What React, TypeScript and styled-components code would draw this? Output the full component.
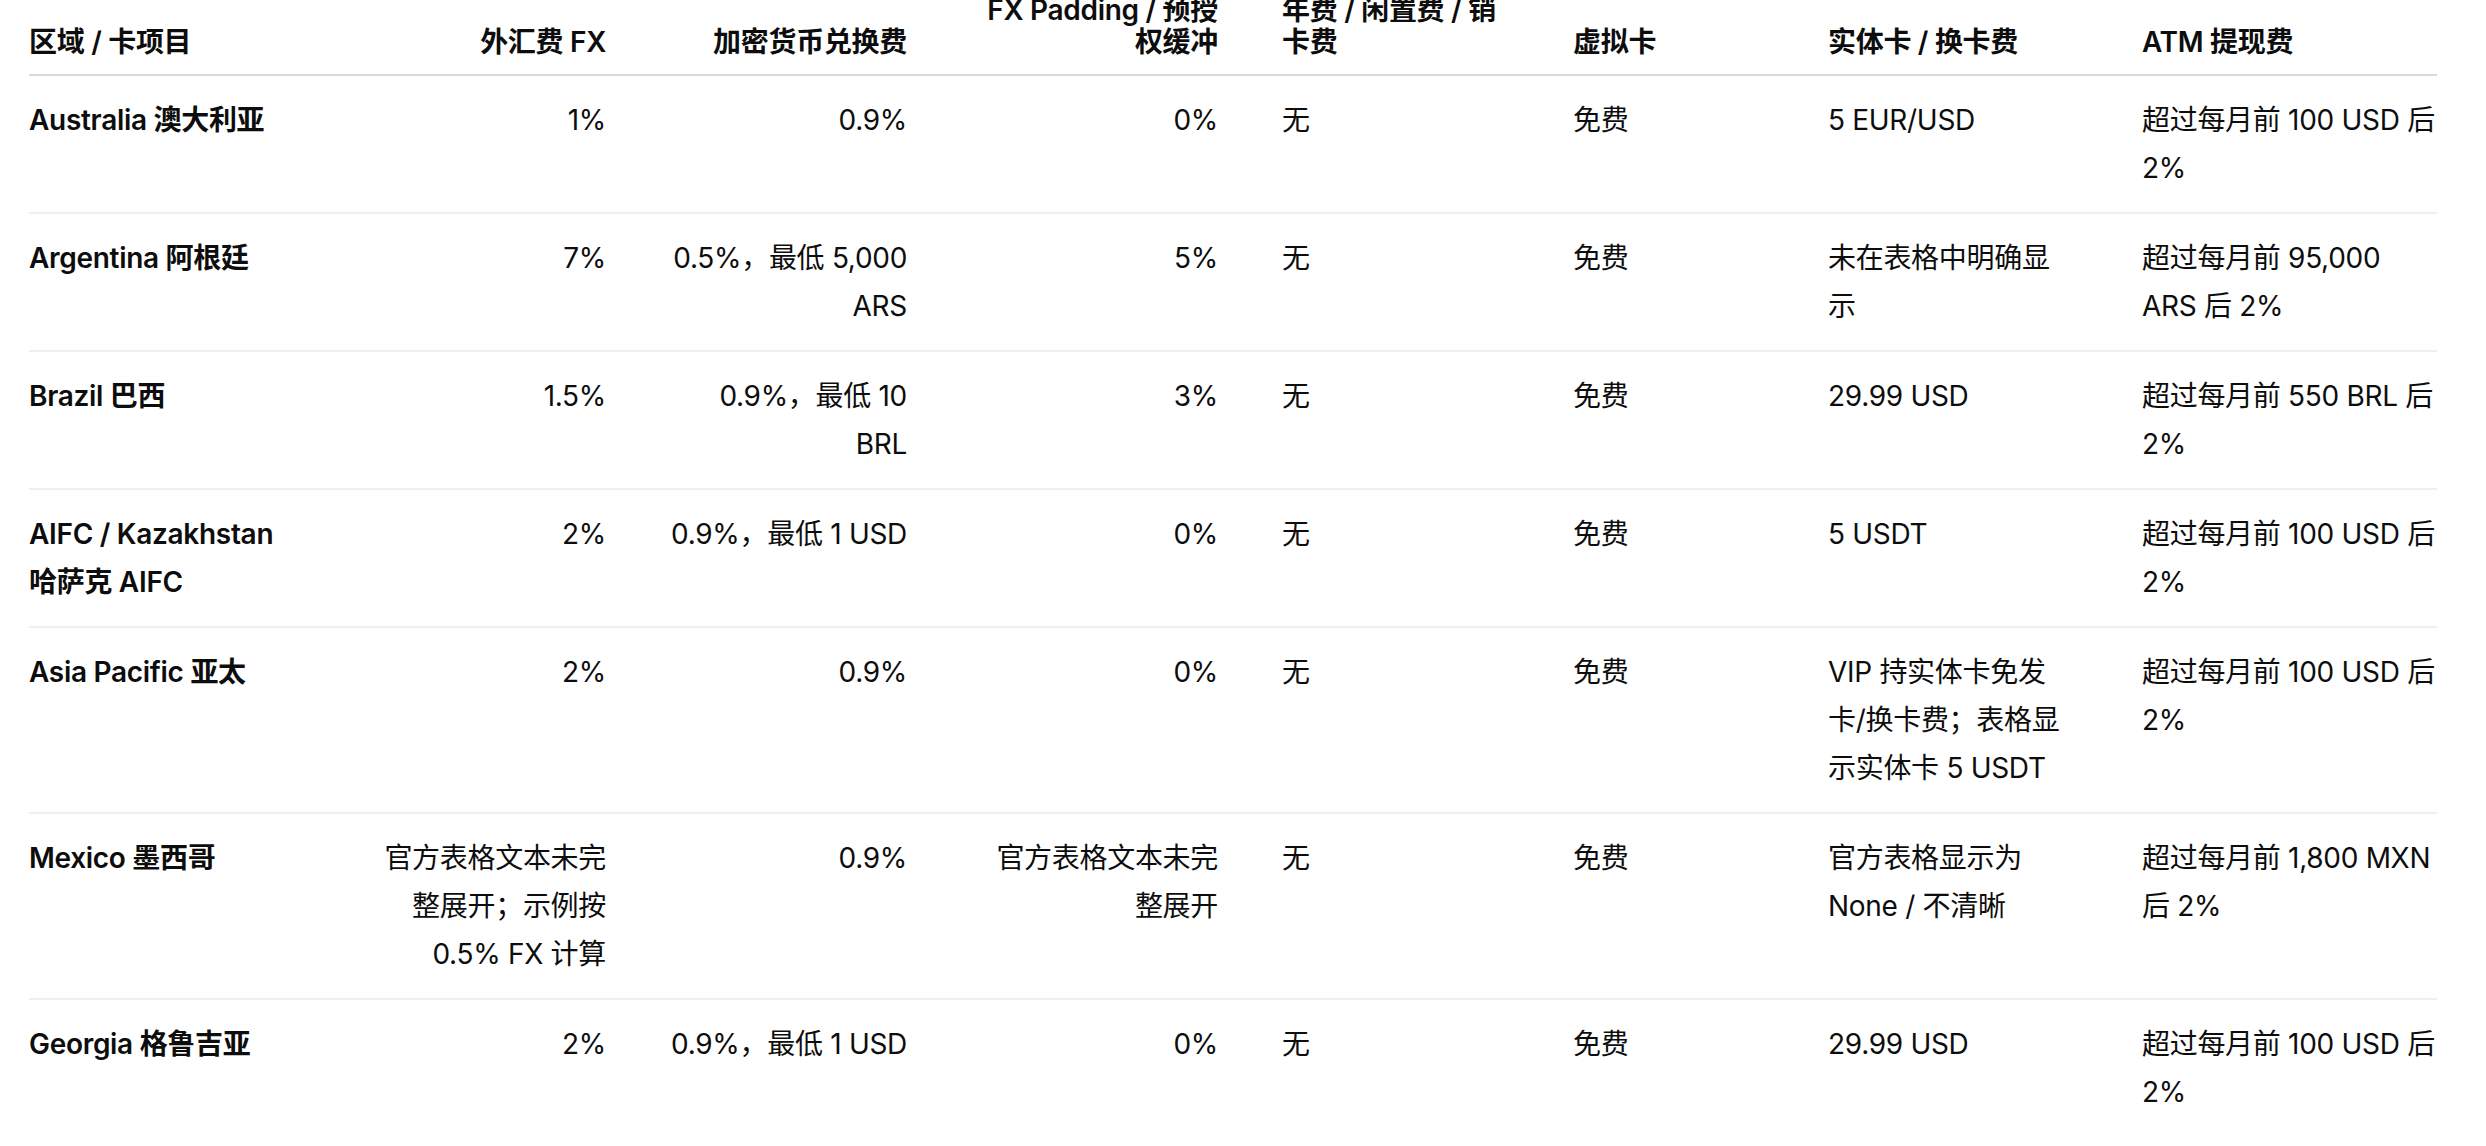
import React from 'react'
import styled, { createGlobalStyle } from 'styled-components'

const GlobalStyle = createGlobalStyle`
  html, body {
    margin: 0;
    padding: 0;
    background: #ffffff;
    overflow: hidden;
  }
  body {
    font-family: "Inter", "Noto Sans CJK SC", sans-serif;
    color: #0d0d0d;
  }
`;

const Page = styled.div`
  padding-left: 29px;
  margin-top: -22px;
`;

const Table = styled.table`
  width: 2408px;
  table-layout: fixed;
  border-collapse: collapse;
  border-spacing: 0;
  font-size: 28px;
  letter-spacing: -0.3px;
`;

type Align = 'left' | 'right';

const HeadCell = styled.th<{ $align: Align }>`
  text-align: ${(p) => p.$align};
  vertical-align: bottom;
  font-weight: 600;
  line-height: 32px;
  padding: 16px 32px 16px 32px;
  border-bottom: 2px solid #d9d9d9;
  white-space: pre;

  &:first-child {
    padding-left: 0;
  }
  &:last-child {
    padding-right: 0;
  }
`;

const Row = styled.tr`
  border-bottom: 2px solid #efefef;

  &:last-child {
    border-bottom: none;
  }
`;

const Cell = styled.td<{ $align: Align; $strong?: boolean }>`
  text-align: ${(p) => p.$align};
  vertical-align: top;
  font-weight: ${(p) => (p.$strong ? 600 : 400)};
  line-height: 48px;
  padding: 20px 32px;
  white-space: pre;

  &:first-child {
    padding-left: 0;
  }
  &:last-child {
    padding-right: 0;
  }
`;

const widths = [316, 293, 301, 311, 291, 255, 314, 327];
const aligns: Align[] = ['left', 'right', 'right', 'right', 'left', 'left', 'left', 'left'];

const headers = [
  '区域 / 卡项目',
  '外汇费 FX',
  '加密货币兑换费',
  'FX Padding / 预授\n权缓冲',
  '年费 / 闲置费 / 销\n卡费',
  '虚拟卡',
  '实体卡 / 换卡费',
  'ATM 提现费',
];

const rows: string[][] = [
  ['Australia 澳大利亚', '1%', '0.9%', '0%', '无', '免费', '5 EUR/USD', '超过每月前 100 USD 后\n2%'],
  ['Argentina 阿根廷', '7%', '0.5%，最低 5,000\nARS', '5%', '无', '免费', '未在表格中明确显\n示', '超过每月前 95,000\nARS 后 2%'],
  ['Brazil 巴西', '1.5%', '0.9%，最低 10\nBRL', '3%', '无', '免费', '29.99 USD', '超过每月前 550 BRL 后\n2%'],
  ['AIFC / Kazakhstan\n哈萨克 AIFC', '2%', '0.9%，最低 1 USD', '0%', '无', '免费', '5 USDT', '超过每月前 100 USD 后\n2%'],
  ['Asia Pacific 亚太', '2%', '0.9%', '0%', '无', '免费', 'VIP 持实体卡免发\n卡/换卡费；表格显\n示实体卡 5 USDT', '超过每月前 100 USD 后\n2%'],
  ['Mexico 墨西哥', '官方表格文本未完\n整展开；示例按\n0.5% FX 计算', '0.9%', '官方表格文本未完\n整展开', '无', '免费', '官方表格显示为\nNone / 不清晰', '超过每月前 1,800 MXN\n后 2%'],
  ['Georgia 格鲁吉亚', '2%', '0.9%，最低 1 USD', '0%', '无', '免费', '29.99 USD', '超过每月前 100 USD 后\n2%'],
];

export default function App() {
  return (
    <>
      <GlobalStyle />
      <Page>
        <Table>
          <colgroup>
            {widths.map((w, i) => (
              <col key={i} style={{ width: w }} />
            ))}
          </colgroup>
          <thead>
            <tr>
              {headers.map((h, i) => (
                <HeadCell key={i} $align={aligns[i]}>{h}</HeadCell>
              ))}
            </tr>
          </thead>
          <tbody>
            {rows.map((r, ri) => (
              <Row key={ri}>
                {r.map((c, ci) => (
                  <Cell key={ci} $align={aligns[ci]} $strong={ci === 0}>{c}</Cell>
                ))}
              </Row>
            ))}
          </tbody>
        </Table>
      </Page>
    </>
  )
}
